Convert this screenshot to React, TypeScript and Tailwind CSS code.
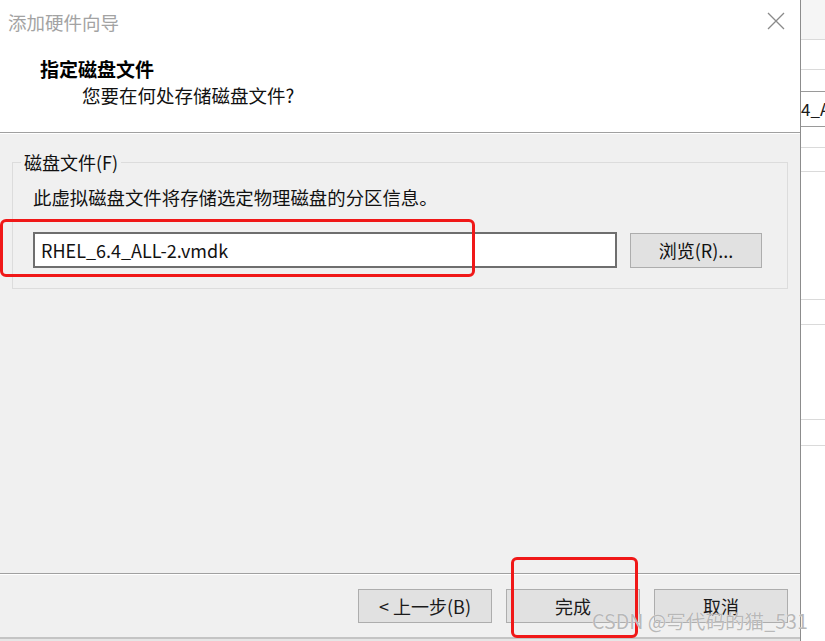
import React from "react";

const font = { fontFamily: '"Noto Sans CJK SC", "Noto Sans", sans-serif' };

function WizardButton({ label }: { label: string }) {
  return (
    <button className="h-[34px] w-[134px] border border-[#adadad] bg-[#e1e1e1] text-[18px] leading-none text-[#1a1a1a]">
      {label}
    </button>
  );
}

function SideStrip() {
  // the window behind the dialog, peeking out on the right
  return (
    <div className="flex w-[24px] flex-col bg-white">
      <div className="h-[40px] border-b border-[#dadada] bg-[#f5f5f5]" />
      <div className="h-[30px] border-b border-[#dadada]" />
      <div className="h-[22px] border-b border-[#9a9a9a]" />
      <div className="flex h-[35px] items-center overflow-hidden border-b border-[#9a9a9a] whitespace-nowrap text-[17px] text-[#1a1a1a]">
        4_A
      </div>
      <div className="h-[21px] border-b border-[#dadada]" />
      <div className="h-[24px] border-b border-[#dadada]" />
      <div className="h-[128px] border-b border-[#dadada]" />
      <div className="h-[25px] border-b border-[#dadada]" />
      <div className="h-[95px] border-b border-[#dadada]" />
      <div className="h-[26px] border-b border-[#dadada]" />
      <div className="flex-1" />
    </div>
  );
}

export default function App() {
  return (
    <div className="relative flex h-[641px] w-[825px] overflow-hidden bg-white" style={font}>
      <div className="flex w-[800px] flex-col bg-white">
        {/* title bar */}
        <div className="flex h-[45px] items-center justify-between pl-[8px] pr-[15px]">
          <span className="text-[18.5px] text-[#a3a3a3]">添加硬件向导</span>
          <svg width="18" height="18" viewBox="0 0 18 18" className="mb-[4px]">
            <path d="M1 1 L17 17 M17 1 L1 17" stroke="#8a8a8a" strokeWidth="1.3" fill="none" />
          </svg>
        </div>

        {/* header */}
        <div className="flex h-[87px] flex-col pt-[11px]">
          <div className="pl-[40px] text-[19px] font-bold leading-[26px] text-black">指定磁盘文件</div>
          <div className="pl-[82px] text-[18.5px] leading-[26px] text-[#111]">您要在何处存储磁盘文件?</div>
        </div>
        <div className="h-[2px] border-t border-[#a0a0a0] bg-white" />

        {/* body */}
        <div className="flex flex-1 flex-col bg-[#f0f0f0] pt-[28px]">
          <div className="relative mx-[12px] border border-[#dcdcdc] px-[20px] pb-[20px] pt-[22px]">
            <span className="absolute -top-[13px] left-[8px] bg-[#f0f0f0] px-[3px] text-[18px] leading-[24px] text-[#111]">
              磁盘文件(F)
            </span>
            <div className="text-[18.4px] leading-[24px] text-[#111]">此虚拟磁盘文件将存储选定物理磁盘的分区信息。</div>
            <div className="mt-[23px] flex items-center gap-[13px]">
              <div className="flex h-[36px] w-[584px] items-center border-2 border-[#6e6e6e] bg-white pl-[6px] text-[18px] text-[#111]">
                RHEL_6.4_ALL-2.vmdk
              </div>
              <button className="h-[35px] w-[132px] border border-[#adadad] bg-[#e1e1e1] text-[18px] leading-none text-[#111]">
                浏览(R)...
              </button>
            </div>
          </div>
        </div>

        {/* footer */}
        <div className="h-[2px] border-t border-[#a0a0a0] bg-white" />
        <div className="flex h-[62px] justify-end gap-[14px] bg-[#f0f0f0] pr-[12px] pt-[14px]">
          <WizardButton label="< 上一步(B)" />
          <WizardButton label="完成" />
          <WizardButton label="取消" />
        </div>
        <div className="h-[4px] border-t-2 border-[#c4c4c4] bg-[#e6e6e6]" />
      </div>

      {/* dialog edge shadow */}
      <div className="w-[1px] bg-[#8c8c8c]" />
      <div className="w-[6px] bg-gradient-to-r from-[#c8c8c8] to-white" />
      <div className="-ml-[6px]" />
      <SideStrip />

      {/* red annotation boxes */}
      <div className="absolute left-0 top-[219px] h-[58px] w-[475px] rounded-[6px] border-[3px] border-[#f01818]" />
      <div className="absolute left-[511px] top-[557px] h-[81px] w-[127px] rounded-[6px] border-[3px] border-[#f01818]" />

      {/* watermark */}
      <div
        className="absolute left-[592px] top-[606px] whitespace-nowrap text-[19.6px] text-[#b8b8b8]"
        style={{ textShadow: "0 0 1px #ffffff" }}
      >
        CSDN @写代码的猫_531
      </div>
    </div>
  );
}
